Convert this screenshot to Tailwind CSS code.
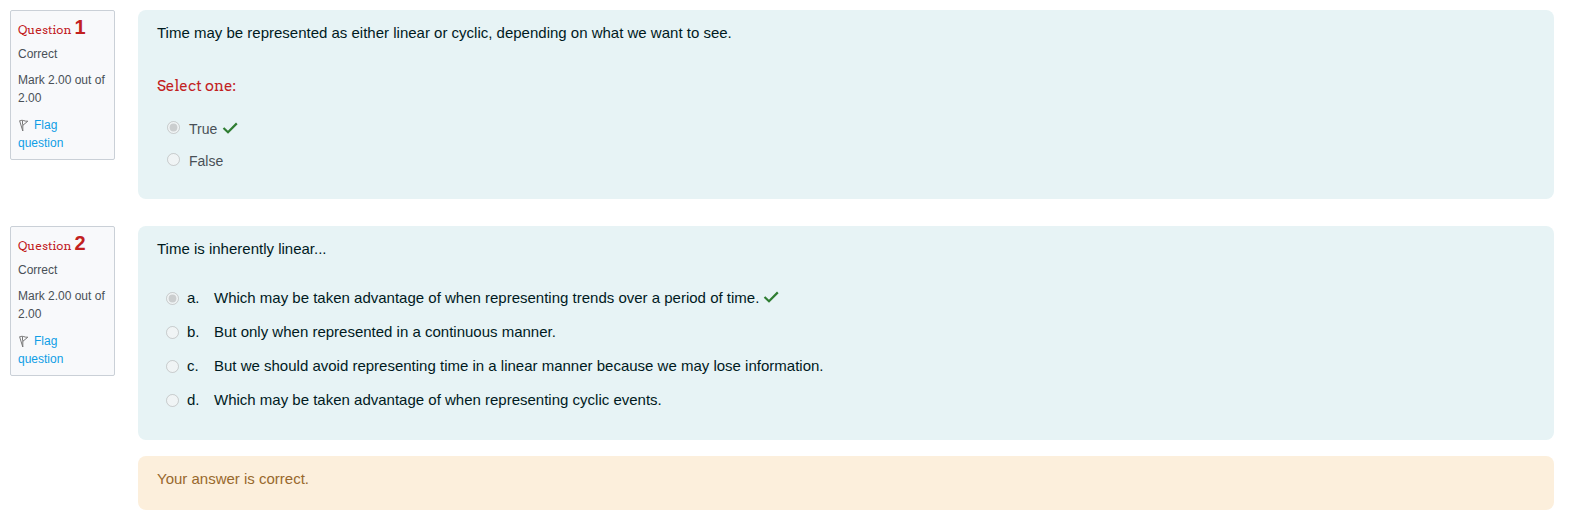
<!DOCTYPE html>
<html lang="en">
<head>
<meta charset="utf-8">
<meta name="viewport" content="width=device-width, initial-scale=1">
<title>Quiz review</title>
<script src="https://cdn.jsdelivr.net/npm/@tailwindcss/browser@4"></script>
</head>
<body class="bg-white font-['Liberation_Sans',Arial,sans-serif] text-[15px] leading-[22px] text-[#001a1e]">
<svg class="hidden" aria-hidden="true">
  <symbol id="check" viewBox="0 0 16 12"><path d="M1.5 6 6 10.2 14.8 1.4" fill="none" stroke="#2f7d32" stroke-width="2.2"/></symbol>
  <symbol id="flag" viewBox="0 0 12 13"><path d="M1.5 1.5 4.8 12M2 1.8 Q4 .8 5.8 1.6 T9.8 2.2L5 6.2M4.8 5V12M4.5 2v3" fill="none" stroke="#777" stroke-width="1"/></symbol>
</svg>
<main class="flex flex-col gap-[27px] py-[10px] pl-[10px] pr-[15px]">
  <section class="flex items-start gap-[23px]">
    <aside class="w-[105px] shrink-0 rounded-[2px] border border-[#cad0d7] bg-[#f8f9fb] px-[7px] pt-[6px] pb-[7px] text-xs leading-[18px] text-[#495057]">
      <h2 class="mb-[7px] flex h-[21px] items-baseline gap-[3px] font-[Arvo,'DejaVu_Serif',serif] text-xs leading-[21px] text-[#c2211f]">Question <span class="font-['Liberation_Sans_Narrow','Liberation_Sans',sans-serif] text-xl leading-[21px] font-bold">1</span></h2>
      <p class="mb-2">Correct</p>
      <p class="mb-[9px]">Mark 2.00 out of 2.00</p>
      <a href="#" class="block pr-5 text-[#0f9ee6]"><svg class="mr-1 inline-block h-[13px] w-3 align-[-3px]" aria-hidden="true"><use href="#flag"/></svg>Flag question</a>
    </aside>
    <div class="min-w-0 flex-1 rounded-lg bg-[#e7f3f5] px-[19px] pt-3 pb-[22px]">
      <p>Time may be represented as either linear or cyclic, depending on what we want to see.</p>
      <fieldset class="mt-[31px]">
        <legend class="mb-4 font-[Arvo,'DejaVu_Serif',serif] text-[15px] leading-[22px] text-[#c2211f]">Select one:</legend>
        <div class="flex flex-col pl-[10px] text-sm text-[#495057]">
          <div class="flex h-8 items-center"><input id="q1t" name="q1" type="radio" class="mb-1 mr-[9px] size-[13px]" checked disabled><label for="q1t">True</label><svg class="mb-0.5 ml-[5px] h-3 w-4" role="img" aria-label="Correct"><use href="#check"/></svg></div>
          <div class="flex h-8 items-center"><input id="q1f" name="q1" type="radio" class="mb-1 mr-[9px] size-[13px]" disabled><label for="q1f">False</label></div>
        </div>
      </fieldset>
    </div>
  </section>
  <section class="flex items-start gap-[23px]">
    <aside class="w-[105px] shrink-0 rounded-[2px] border border-[#cad0d7] bg-[#f8f9fb] px-[7px] pt-[6px] pb-[7px] text-xs leading-[18px] text-[#495057]">
      <h2 class="mb-[7px] flex h-[21px] items-baseline gap-[3px] font-[Arvo,'DejaVu_Serif',serif] text-xs leading-[21px] text-[#c2211f]">Question <span class="font-['Liberation_Sans_Narrow','Liberation_Sans',sans-serif] text-xl leading-[21px] font-bold">2</span></h2>
      <p class="mb-2">Correct</p>
      <p class="mb-[9px]">Mark 2.00 out of 2.00</p>
      <a href="#" class="block pr-5 text-[#0f9ee6]"><svg class="mr-1 inline-block h-[13px] w-3 align-[-3px]" aria-hidden="true"><use href="#flag"/></svg>Flag question</a>
    </aside>
    <div class="flex min-w-0 flex-1 flex-col gap-4">
      <div class="rounded-lg bg-[#e7f3f5] px-[19px] pt-3 pb-[23px]">
        <p>Time is inherently linear...</p>
        <div role="radiogroup" aria-label="Answer" class="mt-[21px] flex flex-col pl-[9px]">
          <div class="flex h-[34px] items-center"><input id="q2a" name="q2" type="radio" class="mr-2 size-[13px]" checked disabled><label for="q2a" class="flex"><span class="w-[27px]">a.</span><span>Which may be taken advantage of when representing trends over a period of time.</span></label><svg class="mb-0.5 ml-1 h-3 w-4" role="img" aria-label="Correct"><use href="#check"/></svg></div>
          <div class="flex h-[34px] items-center"><input id="q2b" name="q2" type="radio" class="mr-2 size-[13px]" disabled><label for="q2b" class="flex"><span class="w-[27px]">b.</span><span>But only when represented in a continuous manner.</span></label></div>
          <div class="flex h-[34px] items-center"><input id="q2c" name="q2" type="radio" class="mr-2 size-[13px]" disabled><label for="q2c" class="flex"><span class="w-[27px]">c.</span><span>But we should avoid representing time in a linear manner because we may lose information.</span></label></div>
          <div class="flex h-[34px] items-center"><input id="q2d" name="q2" type="radio" class="mr-2 size-[13px]" disabled><label for="q2d" class="flex"><span class="w-[27px]">d.</span><span>Which may be taken advantage of when representing cyclic events.</span></label></div>
        </div>
      </div>
      <div class="rounded-lg bg-[#fcefdc] px-[19px] pt-3 pb-5 text-[#98682c]">Your answer is correct.</div>
    </div>
  </section>
</main>
</body>
</html>
